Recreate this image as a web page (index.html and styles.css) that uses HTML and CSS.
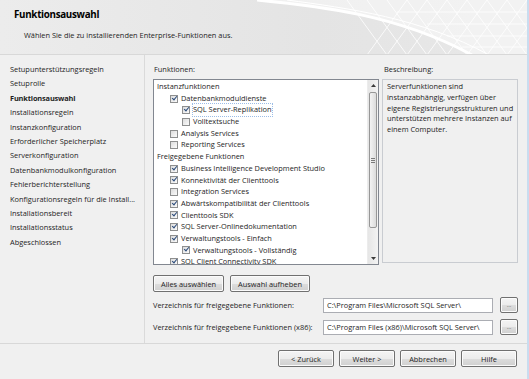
FILE: index.html
```html
<!DOCTYPE html>
<html lang="de">
<head>
    <meta charset="UTF-8">
    <title>SQL Server-Setup - Funktionsauswahl</title>
    <link rel="stylesheet" href="styles.css">
</head>
<body>
    <div class="window">
        <header class="header">
            <h1>Funktionsauswahl</h1>
            <p>Wählen Sie die zu installierenden Enterprise-Funktionen aus.</p>
            <svg class="mesh" width="270" height="55" viewBox="0 0 270 55">
                <path d="M0 0 C60 6 140 14 215 55 L270 55 L270 0 Z" fill="#ffffff" opacity="0.45"/>
                <path d="M0 0 C60 6 140 14 215 55" fill="none" stroke="#ffffff" stroke-width="3"/>
                <path d="M30 0 C90 8 165 18 232 55" fill="none" stroke="#ffffff" stroke-width="1"/>
                <g stroke="#ffffff" stroke-width="0.8" fill="none">
                    <path d="M90 0 L130 55 M110 0 L150 55 M130 0 L170 55 M150 0 L190 55 M170 0 L210 55 M190 0 L230 55 M210 0 L250 55 M230 0 L270 55 M250 0 L270 28"/>
                    <path d="M150 0 L110 55 M170 0 L130 55 M190 0 L150 55 M210 0 L170 55 M230 0 L190 55 M250 0 L210 55 M270 0 L230 55 M270 28 L250 55"/>
                    <path d="M140 12 L270 12 M170 24 L270 24 M190 36 L270 36 M205 47 L270 47"/>
                </g>
            </svg>
        </header>

        <div class="content">
            <nav class="steps">
                <ul>
                    <li>Setupunterstützungsregeln</li>
                    <li>Setuprolle</li>
                    <li class="current">Funktionsauswahl</li>
                    <li>Installationsregeln</li>
                    <li>Instanzkonfiguration</li>
                    <li>Erforderlicher Speicherplatz</li>
                    <li>Serverkonfiguration</li>
                    <li>Datenbankmodulkonfiguration</li>
                    <li>Fehlerberichterstellung</li>
                    <li>Konfigurationsregeln für die Install...</li>
                    <li>Installationsbereit</li>
                    <li>Installationsstatus</li>
                    <li>Abgeschlossen</li>
                </ul>
            </nav>

            <main class="main">
                <div class="panes">
                    <section class="pane">
                        <div class="label">Funktionen:</div>
                        <div class="listbox">
                            <ul class="tree">
                                <li class="group">Instanzfunktionen</li>
                                <li class="lvl1"><span class="cb on"></span>Datenbankmoduldienste</li>
                                <li class="lvl2"><span class="cb on"></span><span class="focus">SQL Server-Replikation</span></li>
                                <li class="lvl2"><span class="cb"></span>Volltextsuche</li>
                                <li class="lvl1"><span class="cb"></span>Analysis Services</li>
                                <li class="lvl1"><span class="cb"></span>Reporting Services</li>
                                <li class="group">Freigegebene Funktionen</li>
                                <li class="lvl1"><span class="cb on"></span>Business Intelligence Development Studio</li>
                                <li class="lvl1"><span class="cb on"></span>Konnektivität der Clienttools</li>
                                <li class="lvl1"><span class="cb"></span>Integration Services</li>
                                <li class="lvl1"><span class="cb on"></span>Abwärtskompatibilität der Clienttools</li>
                                <li class="lvl1"><span class="cb on"></span>Clienttools SDK</li>
                                <li class="lvl1"><span class="cb on"></span>SQL Server-Onlinedokumentation</li>
                                <li class="lvl1"><span class="cb on"></span>Verwaltungstools - Einfach</li>
                                <li class="lvl2"><span class="cb on"></span>Verwaltungstools - Vollständig</li>
                                <li class="lvl1"><span class="cb on"></span>SQL Client Connectivity SDK</li>
                            </ul>
                            <div class="scrollbar">
                                <div class="arrow">
                                    <svg width="5" height="3" viewBox="0 0 5 3"><path d="M0 3 L2.5 0 L5 3 Z" fill="#3b3b3b"/></svg>
                                </div>
                                <div class="track">
                                    <div class="thumb">
                                        <div class="grip"></div>
                                    </div>
                                </div>
                                <div class="arrow">
                                    <svg width="5" height="3" viewBox="0 0 5 3"><path d="M0 0 L5 0 L2.5 3 Z" fill="#3b3b3b"/></svg>
                                </div>
                            </div>
                        </div>
                    </section>
                    <section class="pane">
                        <div class="label">Beschreibung:</div>
                        <div class="descbox">
                            Serverfunktionen sind<br>
                            instanzabhängig, verfügen über<br>
                            eigene Registrierungsstrukturen und<br>
                            unterstützen mehrere Instanzen auf<br>
                            einem Computer.
                        </div>
                    </section>
                </div>

                <div class="select-btns">
                    <button class="btn">Alles auswählen</button>
                    <button class="btn">Auswahl aufheben</button>
                </div>

                <div class="dir-row">
                    <label>Verzeichnis für freigegebene Funktionen:</label>
                    <input class="path" type="text" value="C:\Program Files\Microsoft SQL Server\">
                    <button class="btn browse">...</button>
                </div>
                <div class="dir-row">
                    <label>Verzeichnis für freigegebene Funktionen (x86):</label>
                    <input class="path" type="text" value="C:\Program Files (x86)\Microsoft SQL Server\">
                    <button class="btn browse">...</button>
                </div>
            </main>
        </div>

        <footer class="footer">
            <button class="btn nav-btn">&lt; Zurück</button>
            <button class="btn nav-btn">Weiter &gt;</button>
            <button class="btn nav-btn">Abbrechen</button>
            <button class="btn nav-btn">Hilfe</button>
        </footer>
    </div>
</body>
</html>
```

FILE: styles.css
```css
body {
    margin: 0;
    font-family: 'Open Sans', 'Noto Sans', sans-serif;
    font-size: 7.4px;
    color: #1e1e1e;
    background: #f0f0f0;
}
.window {
    width: 529px;
    height: 379px;
    box-sizing: border-box;
    border-right: 2px solid #c9dcef;
    background: #f0f0f0;
    display: flex;
    flex-direction: column;
    overflow: hidden;
}
.header {
    position: relative;
    height: 55px;
    flex-shrink: 0;
    box-sizing: border-box;
    padding: 8px 0 0 14px;
    background: linear-gradient(to right, #ececec 0%, #e4e4e4 60%, #e8e8e8 100%);
    border-bottom: 1px solid #d8d8d8;
    overflow: hidden;
}
.header h1 {
    margin: 0;
    font-size: 9.8px;
    font-weight: 700;
    letter-spacing: -0.3px;
    color: #000;
    line-height: 14px;
}
.header p {
    margin: 8px 0 0 10px;
    color: #1e1e1e;
}
.mesh {
    position: absolute;
    top: 0;
    right: 0;
}
.content {
    display: flex;
    height: 288px;
    flex-shrink: 0;
}
.steps {
    width: 144px;
    flex-shrink: 0;
    border-right: 1px solid #dadada;
    padding-top: 7px;
}
.steps ul {
    list-style: none;
    margin: 0;
    padding: 0 0 0 10px;
}
.steps li {
    height: 14.4px;
    line-height: 14.4px;
    white-space: nowrap;
}
.steps li.current {
    font-weight: 700;
    letter-spacing: -0.15px;
}
.main {
    flex: 1;
    padding: 8px 10px 0 8px;
    display: flex;
    flex-direction: column;
}
.panes {
    display: grid;
    grid-template-columns: 226px 1fr;
    gap: 3px;
}
.label {
    height: 12px;
    line-height: 12px;
    margin-bottom: 4px;
    padding-left: 1px;
}
.pane:last-child .label {
    padding-left: 2px;
}
.listbox {
    height: 186px;
    box-sizing: border-box;
    border: 1px solid #828790;
    background: #fff;
    display: flex;
    overflow: hidden;
}
.tree {
    flex: 1;
    list-style: none;
    margin: 0;
    padding: 1px 0 0 3px;
    overflow: hidden;
}
.tree li {
    height: 11.7px;
    line-height: 11.7px;
    white-space: nowrap;
    display: flex;
    align-items: center;
}
.tree li.lvl1 {
    padding-left: 13px;
}
.tree li.lvl2 {
    padding-left: 25px;
}
.cb {
    width: 8px;
    height: 8px;
    box-sizing: border-box;
    border: 1px solid #8e8f8f;
    background: linear-gradient(135deg, #dcdcdc, #fbfbfb);
    margin-right: 3px;
    flex-shrink: 0;
    position: relative;
}
.cb.on::after {
    content: "";
    position: absolute;
    left: 1px;
    top: 0px;
    width: 4px;
    height: 2px;
    border-left: 1.3px solid #2a4a7a;
    border-bottom: 1.3px solid #2a4a7a;
    transform: rotate(-50deg);
}
.focus {
    outline: 1px dotted #9cbde6;
    outline-offset: 0;
    padding-right: 1px;
}
.scrollbar {
    width: 10px;
    flex-shrink: 0;
    display: flex;
    flex-direction: column;
    background: linear-gradient(to right, #e6e6e6, #f3f3f3);
    border-left: 1px solid #ececec;
}
.arrow {
    height: 11px;
    display: flex;
    align-items: center;
    justify-content: center;
}
.track {
    flex: 1;
    padding: 1px 0;
}
.thumb {
    height: 134px;
    margin: 0 1px;
    border: 1px solid #979797;
    border-radius: 2px;
    background: linear-gradient(to right, #f3f3f3, #dcdcdc);
    display: flex;
    align-items: center;
    justify-content: center;
}
.grip {
    width: 4px;
    height: 5px;
    background: repeating-linear-gradient(to bottom, #7a7a7a 0, #7a7a7a 1px, transparent 1px, transparent 2px);
}
.descbox {
    height: 184px;
    box-sizing: border-box;
    margin-top: 2px;
    border: 1px solid #c9ccd1;
    background: #f0f0f0;
    padding: 1px 4px;
    line-height: 10.8px;
    white-space: nowrap;
}
.btn {
    font-family: inherit;
    font-size: 7.4px;
    color: #1e1e1e;
    height: 17px;
    padding: 0 6px;
    border: 1px solid #707070;
    border-radius: 2px;
    background: linear-gradient(to bottom, #f4f4f4 0%, #ececec 50%, #dddddd 51%, #d0d0d0 100%);
    box-shadow: inset 0 0 0 1px #fbfbfb;
    cursor: pointer;
}
.select-btns {
    display: flex;
    gap: 6px;
    margin-top: 10px;
}
.select-btns .btn {
    padding: 0 7px;
}
.dir-row {
    display: flex;
    align-items: center;
    margin-top: 5px;
}
.dir-row + .dir-row {
    margin-top: 6px;
}
.dir-row label {
    width: 170px;
    white-space: nowrap;
}
.path {
    width: 170px;
    height: 15px;
    box-sizing: border-box;
    border: 1px solid #abadb3;
    padding: 0 3px;
    font-family: inherit;
    font-size: 7.4px;
    color: #1e1e1e;
    background: #fff;
}
.browse {
    width: 18px;
    height: 16px;
    padding: 0;
    margin-left: 7px;
    font-size: 6px;
    color: #555;
}
.footer {
    flex: 1;
    border-top: 1px solid #d8d8d8;
    display: flex;
    justify-content: flex-end;
    align-items: flex-start;
    gap: 5px;
    padding: 6px 10px 0 0;
}
.nav-btn {
    width: 56px;
}
```
